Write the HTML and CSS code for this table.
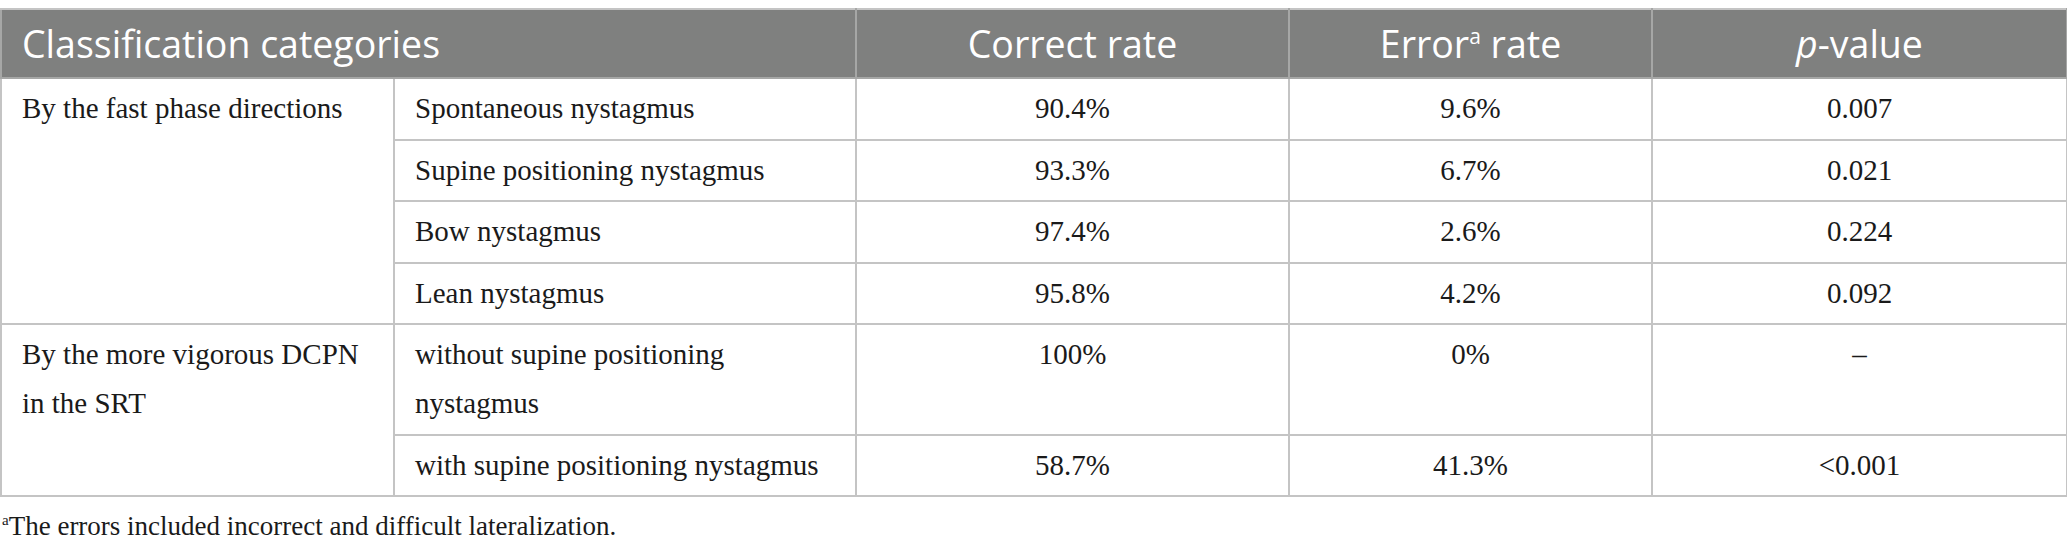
FILE: index.html
```html
<!DOCTYPE html>
<html>
<head>
<meta charset="utf-8">
<link rel="stylesheet" href="styles.css">
</head>
<body>
<div class="wrap">
<table class="data">
  <colgroup>
    <col class="c1"><col class="c2"><col class="c3"><col class="c4"><col class="c5">
  </colgroup>
  <thead>
    <tr>
      <th colspan="2" class="left">Classification categories</th>
      <th>Correct rate</th>
      <th>Error<sup class="hsup">a</sup> rate</th>
      <th><i>p</i>-value</th>
    </tr>
  </thead>
  <tbody>
    <tr>
      <td rowspan="4" class="group">By the fast phase directions</td>
      <td>Spontaneous nystagmus</td>
      <td class="num">90.4%</td>
      <td class="num">9.6%</td>
      <td class="num">0.007</td>
    </tr>
    <tr>
      <td>Supine positioning nystagmus</td>
      <td class="num">93.3%</td>
      <td class="num">6.7%</td>
      <td class="num">0.021</td>
    </tr>
    <tr>
      <td>Bow nystagmus</td>
      <td class="num">97.4%</td>
      <td class="num">2.6%</td>
      <td class="num">0.224</td>
    </tr>
    <tr>
      <td>Lean nystagmus</td>
      <td class="num">95.8%</td>
      <td class="num">4.2%</td>
      <td class="num">0.092</td>
    </tr>
    <tr class="group-start">
      <td rowspan="2" class="group">By the more vigorous DCPN<br>in the SRT</td>
      <td>without supine positioning<br>nystagmus</td>
      <td class="num">100%</td>
      <td class="num">0%</td>
      <td class="num">–</td>
    </tr>
    <tr>
      <td>with supine positioning nystagmus</td>
      <td class="num">58.7%</td>
      <td class="num">41.3%</td>
      <td class="num">&lt;0.001</td>
    </tr>
  </tbody>
</table>
<p class="foot"><sup class="fsup">a</sup>The errors included incorrect and difficult lateralization.</p>
</div>
</body>
</html>
```
FILE: styles.css
```css
html, body {
  margin: 0;
  padding: 0;
  background: #ffffff;
}
.wrap {
  padding-top: 8px;
  width: 2066px;
}
.data {
  border-collapse: collapse;
  width: 2066px;
  table-layout: fixed;
  font-family: "Liberation Serif", "Times New Roman", serif;
  color: #1a1a1a;
}
.c1 { width: 393px; }
.c2 { width: 462px; }
.c3 { width: 433px; }
.c4 { width: 363px; }
.c5 { width: 415px; }
.data th {
  background: #7f807f;
  color: #ffffff;
  font-family: "Open Sans", "Noto Sans", sans-serif;
  font-weight: 400;
  font-size: 37.5px;
  height: 67px;
  padding: 0 20px;
  text-align: center;
  vertical-align: middle;
  border: 2px solid #a6a7a6;
  border-top-color: #c4c4c4;
  line-height: 1;
}
.data th.left {
  text-align: left;
  padding-left: 20px;
}
.hsup {
  font-size: 21px;
  vertical-align: 14px;
  line-height: 0;
}
.data td {
  border: 2px solid #c4c4c4;
  font-size: 29px;
  line-height: 48.6px;
  padding: 5px 20px 6px 20px;
  vertical-align: top;
  text-align: left;
}
.data td.num {
  text-align: center;
}
.data td.group {
  padding-left: 20px;
}
.foot {
  margin: 13px 0 0 2px;
  font-family: "Liberation Serif", "Times New Roman", serif;
  font-size: 27px;
  line-height: 32px;
  color: #1a1a1a;
}
.fsup {
  font-size: 15px;
  vertical-align: 10px;
  line-height: 0;
}
```
